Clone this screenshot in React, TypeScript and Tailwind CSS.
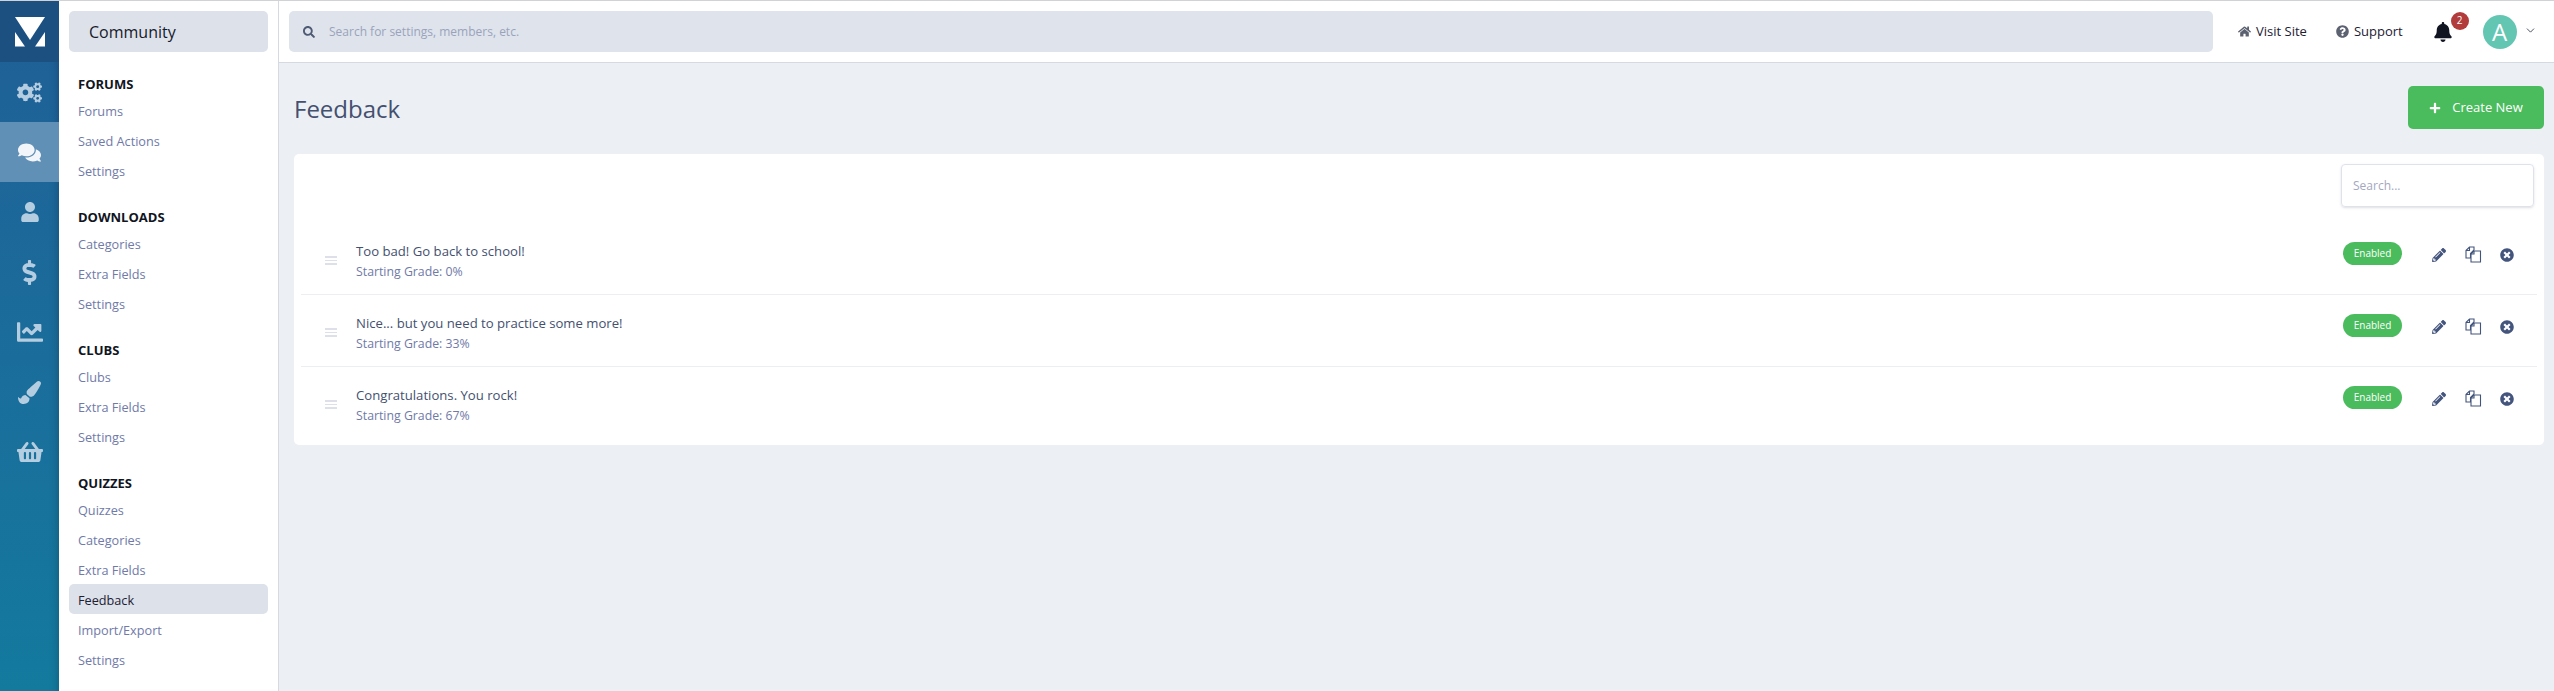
import React from "react";
import { FaCogs, FaComments, FaUser, FaDollarSign, FaChartLine, FaPaintBrush, FaShoppingBasket, FaSearch, FaHome, FaQuestionCircle, FaBell, FaPlus, FaPencilAlt, FaTimesCircle } from "react-icons/fa";
import { ChevronDown } from "lucide-react";

const sections: { title: string; items: string[] }[] = [
  { title: "FORUMS", items: ["Forums", "Saved Actions", "Settings"] },
  { title: "DOWNLOADS", items: ["Categories", "Extra Fields", "Settings"] },
  { title: "CLUBS", items: ["Clubs", "Extra Fields", "Settings"] },
  { title: "QUIZZES", items: ["Quizzes", "Categories", "Extra Fields", "Feedback", "Import/Export", "Settings"] },
];

const rail = [
  { Icon: FaCogs, size: 25, active: false },
  { Icon: FaComments, size: 23, active: true },
  { Icon: FaUser, size: 20, active: false },
  { Icon: FaDollarSign, size: 25, active: false },
  { Icon: FaChartLine, size: 26, active: false },
  { Icon: FaPaintBrush, size: 23, active: false },
  { Icon: FaShoppingBasket, size: 26, active: false },
];

const rows = [
  { t: "Too bad! Go back to school!", g: "Starting Grade: 0%" },
  { t: "Nice... but you need to practice some more!", g: "Starting Grade: 33%" },
  { t: "Congratulations. You rock!", g: "Starting Grade: 67%" },
];

function Files() {
  return (
    <svg width="17" height="17" viewBox="0 0 17 17" fill="none" stroke="#44557d" strokeWidth="1.1" className="ml-[19px] shrink-0">
      <path d="M1 4.5L4.5 1H9V4L5.5 7.5V12H1Z" fill="#fff" />
      <path d="M6 8L9 5H15.5V16H6Z" fill="#fff" />
      <path d="M9 5V8H6" />
      <path d="M4.5 1V4.5H1" />
    </svg>
  );
}

export default function App() {
  return (
    <div className="flex h-[691px] w-[2554px] overflow-hidden border-t border-[#d0d2d6] bg-[#eceff4] font-['Open_Sans','Noto_Sans',sans-serif] text-[13px]">
      <div className="flex w-[59px] shrink-0 flex-col bg-gradient-to-b from-[#1f5f97] to-[#137a9e] shadow-[inset_-10px_0_10px_-10px_rgba(0,0,0,0.25)]">
        <div className="flex h-[61px] items-center justify-center bg-[#1c5080]">
          <svg width="30" height="30" viewBox="0 0 30 30">
            <path d="M0 0H30L15 23Z" fill="#fff" />
            <path d="M0 15L10 29.5H0Z" fill="#fff" />
            <path d="M30 15L20 29.5H30Z" fill="#fff" />
          </svg>
        </div>
        {rail.map(({ Icon, size, active }, i) => (
          <div key={i} className={`flex h-[60px] items-center justify-center ${active ? "bg-[#6090b5] text-[#f2f6fa]" : "text-[#b4cde0]"}`}>
            <Icon size={size} />
          </div>
        ))}
      </div>
      <div className="w-[220px] shrink-0 border-r border-[#d5d9e2] bg-white px-[10px] pt-[10px]">
        <div className="flex h-[41px] items-center rounded-[5px] bg-[#dde1ea] pl-5 text-[16px] font-medium text-[#161b2b]">Community</div>
        {sections.map((s) => (
          <div key={s.title} className="mt-[20px]">
            <div className="flex h-[23px] items-center pl-[9px] pt-[2px] text-[13px] font-bold text-[#111522]">{s.title}</div>
            {s.items.map((it, ii) => (
              <div key={ii} className={`flex h-[30px] items-center rounded-[5px] pl-[9px] pt-[3px] text-[12.7px] ${it === "Feedback" ? "bg-[#dde1ea] text-[#1c2033]" : "text-[#6f7aa8]"}`}>{it}</div>
            ))}
          </div>
        ))}
      </div>
      <div className="flex min-w-0 flex-1 flex-col">
        <div className="flex h-[62px] shrink-0 items-center border-b border-[#d5d9e2] bg-white pl-[10px] pr-[20px]">
          <div className="flex h-[41px] w-[1924px] shrink-0 items-center rounded-[5px] bg-[#dee3ec] pl-[14px] text-[#9aa3bb]">
            <FaSearch size={12} className="text-[#4f5a75]" />
            <span className="ml-[14px] text-[12px]">Search for settings, members, etc.</span>
          </div>
          <div className="ml-[25px] flex shrink-0 items-center gap-[5px] whitespace-nowrap text-[#1c2033]"><FaHome size={13} className="text-[#5c6270]" /><span>Visit Site</span></div>
          <div className="ml-[29px] flex shrink-0 items-center gap-[5px] whitespace-nowrap text-[#1c2033]"><FaQuestionCircle size={13} className="text-[#5c6270]" /><span>Support</span></div>
          <div className="relative ml-[30px]">
            <FaBell size={20} className="text-[#111522]" />
            <span className="absolute -right-[16px] -top-[10px] flex h-[18px] w-[18px] items-center justify-center rounded-full bg-[#b23b3b] text-[10px] text-white">2</span>
          </div>
          <div className="ml-[30px] flex h-[34px] w-[34px] shrink-0 items-center justify-center rounded-full bg-[#63c6b3] text-[24px] text-white">A</div>
          <ChevronDown size={13} strokeWidth={1.6} className="-mt-[2px] ml-[7px] shrink-0 text-[#333a50]" />
        </div>
        <div className="flex flex-1 flex-col pl-[15px] pr-[10px]">
          <div className="flex h-[91px] shrink-0 items-center justify-between pb-[2px]">
            <h1 className="mt-[3px] text-[24px] text-[#44506f]">Feedback</h1>
            <button className="flex h-[43px] w-[136px] items-center justify-center gap-[11px] rounded-[5px] bg-[#4abc5d] text-[13px] text-white"><FaPlus size={12} /><span>Create New</span></button>
          </div>
          <div className="h-[291px] rounded-[5px] bg-white px-[7px]">
            <div className="flex h-[69px] justify-end pr-[3px] pt-[10px]">
              <div className="flex h-[43px] w-[193px] items-center rounded-[4px] border border-[#dfe2ec] pl-[11px] text-[12px] text-[#a3a8bf] shadow-sm">Search...</div>
            </div>
            {rows.map((r, i) => (
              <div key={i} className={`flex h-[72px] items-start ${i < 2 ? "border-b border-[#eceef2]" : ""}`}>
                <div className="ml-[24px] mt-[33px] flex w-[12px] shrink-0 flex-col gap-[2px]">
                  <span className="h-[1.5px] bg-[#dde0e8]" />
                  <span className="h-[1.5px] bg-[#dde0e8]" />
                  <span className="h-[1.5px] bg-[#dde0e8]" />
                </div>
                <div className="ml-[19px] mt-[18px] flex flex-1 flex-col">
                  <span className="text-[13.15px] leading-[20px] text-[#44506f]">{r.t}</span>
                  <span className="mt-[1px] text-[12.3px] leading-[20px] text-[#6f7aa8]">{r.g}</span>
                </div>
                <span className="mt-[19px] flex h-[23px] w-[59px] items-center justify-center rounded-full bg-[#4abc5d] text-[10px] text-white">Enabled</span>
                <div className="mt-[23px] flex items-center">
                  <FaPencilAlt size={14} className="ml-[30px] text-[#44557d]" />
                  <Files />
                  <FaTimesCircle size={14} className="ml-[18px] mr-[23px] text-[#44557d]" />
                </div>
              </div>
            ))}
          </div>
        </div>
      </div>
    </div>
  );
}
